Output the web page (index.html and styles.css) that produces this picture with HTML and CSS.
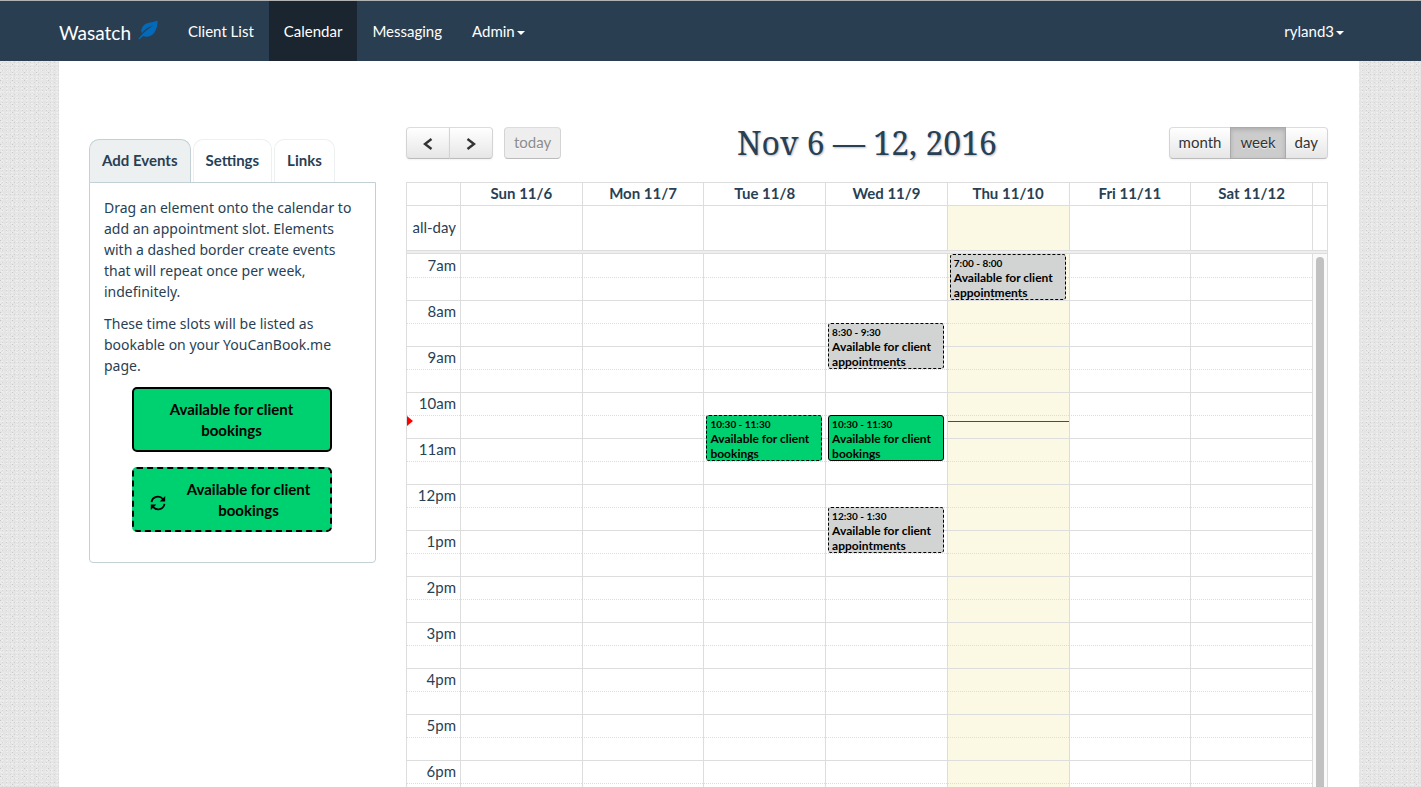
FILE: index.html
```html
<!DOCTYPE html>
<html lang="en">
<head>
<meta charset="utf-8">
<title>Wasatch – Calendar</title>
<link rel="stylesheet" href="styles.css">
</head>
<body>
<div class="page">
<header class="navbar">
  <a class="brand" href="#">Wasatch
    <svg class="leaf" viewBox="0 0 20 20" aria-hidden="true"><path fill="#0369b9" d="M19.6 0.6C14.5 2.9 9.200 2 5.600 5.600 3.200 8 2.900 11 3.700 13.300 6.500 9.400 10.500 6.900 15.600 5.200 11.300 7.900 7 11 3.300 15.300L.3 18.700 1.300 19.400 5 15.900C8.500 17.600 13.500 16.500 16.300 12.700 18.900 9.100 19.700 5 19.600.6Z"/></svg>
  </a>
  <nav class="menu">
    <a href="#">Client List</a>
    <a href="#" class="active" aria-current="page">Calendar</a>
    <a href="#">Messaging</a>
    <a href="#">Admin<span class="caret"></span></a>
  </nav>
  <a class="user" href="#">ryland3<span class="caret"></span></a>
</header>
<main class="content">
  <aside class="sidebar">
    <div class="tabs" role="tablist">
      <button class="tab selected" role="tab" aria-selected="true">Add Events</button>
      <button class="tab" role="tab" aria-selected="false">Settings</button>
      <button class="tab" role="tab" aria-selected="false">Links</button>
    </div>
    <section class="panel">
      <p>Drag an element onto the calendar to add an appointment slot. Elements with a dashed border create events that will repeat once per week, indefinitely.</p>
      <p>These time slots will be listed as bookable on your YouCanBook.me page.</p>
      <div class="slot" draggable="true"><span>Available for client bookings</span></div>
      <div class="slot repeating" draggable="true">
        <svg class="refresh" viewBox="0 0 16 16" fill="none" stroke="#000" stroke-width="1.800" aria-hidden="true"><path d="M1.500 7.200A6.500 6.500 0 0 1 13 4.200M14.500 8.800A6.500 6.500 0 0 1 3 11.800"/><path fill="#000" stroke="none" d="M15.200 1V6.500H9.700ZM.8 15V9.500H6.300Z"/></svg>
        <span>Available for client bookings</span>
      </div>
    </section>
  </aside>
  <section class="calendar">
    <div class="toolbar">
      <div class="tools">
        <div class="group">
          <button class="btn arrow" aria-label="Previous week"><svg viewBox="0 0 10 12"><path d="M8.500 1L2 6L8.500 11"/></svg></button>
          <button class="btn arrow" aria-label="Next week"><svg viewBox="0 0 10 12"><path d="M1.500 1L8 6L1.500 11"/></svg></button>
        </div>
        <button class="btn" disabled>today</button>
      </div>
      <h1>Nov 6 — 12, 2016</h1>
      <div class="tools end">
        <div class="group">
          <button class="btn">month</button>
          <button class="btn pressed" aria-pressed="true">week</button>
          <button class="btn">day</button>
        </div>
      </div>
    </div>
    <table class="week">
      <colgroup><col class="axis"><col span="7"><col class="gutter"></colgroup>
      <thead>
        <tr class="days"><td></td><th scope="col">Sun 11/6</th><th scope="col">Mon 11/7</th><th scope="col">Tue 11/8</th><th scope="col">Wed 11/9</th><th scope="col">Thu 11/10</th><th scope="col">Fri 11/11</th><th scope="col">Sat 11/12</th><td></td></tr>
        <tr class="allday"><th scope="row">all-day</th><td></td><td></td><td></td><td></td><td class="today"></td><td></td><td></td><td></td></tr>
        <tr class="divider"><td colspan="9"></td></tr>
      </thead>
      <tbody>
        <tr><th scope="row">7am</th><td></td><td></td><td></td><td></td><td class="today"><div class="event taken repeats"><time>7:00 - 8:00</time>Available for client appointments</div></td><td></td><td></td><td class="track" rowspan="24"><div class="thumb"></div></td></tr>
        <tr><th></th><td></td><td></td><td></td><td></td><td class="today"></td><td></td><td></td></tr>
        <tr><th scope="row">8am</th><td></td><td></td><td></td><td></td><td class="today"></td><td></td><td></td></tr>
        <tr><th></th><td></td><td></td><td></td><td><div class="event taken repeats"><time>8:30 - 9:30</time>Available for client appointments</div></td><td class="today"></td><td></td><td></td></tr>
        <tr><th scope="row">9am</th><td></td><td></td><td></td><td></td><td class="today"></td><td></td><td></td></tr>
        <tr><th></th><td></td><td></td><td></td><td></td><td class="today"></td><td></td><td></td></tr>
        <tr><th scope="row">10am</th><td></td><td></td><td></td><td></td><td class="today"></td><td></td><td></td></tr>
        <tr><th><span class="now-arrow"></span></th><td></td><td></td><td><div class="event repeats"><time>10:30 - 11:30</time>Available for client bookings</div></td><td><div class="event"><time>10:30 - 11:30</time>Available for client bookings</div></td><td class="today"><span class="now-line"></span></td><td></td><td></td></tr>
        <tr><th scope="row">11am</th><td></td><td></td><td></td><td></td><td class="today"></td><td></td><td></td></tr>
        <tr><th></th><td></td><td></td><td></td><td></td><td class="today"></td><td></td><td></td></tr>
        <tr><th scope="row">12pm</th><td></td><td></td><td></td><td></td><td class="today"></td><td></td><td></td></tr>
        <tr><th></th><td></td><td></td><td></td><td><div class="event taken repeats"><time>12:30 - 1:30</time>Available for client appointments</div></td><td class="today"></td><td></td><td></td></tr>
        <tr><th scope="row">1pm</th><td></td><td></td><td></td><td></td><td class="today"></td><td></td><td></td></tr>
        <tr><th></th><td></td><td></td><td></td><td></td><td class="today"></td><td></td><td></td></tr>
        <tr><th scope="row">2pm</th><td></td><td></td><td></td><td></td><td class="today"></td><td></td><td></td></tr>
        <tr><th></th><td></td><td></td><td></td><td></td><td class="today"></td><td></td><td></td></tr>
        <tr><th scope="row">3pm</th><td></td><td></td><td></td><td></td><td class="today"></td><td></td><td></td></tr>
        <tr><th></th><td></td><td></td><td></td><td></td><td class="today"></td><td></td><td></td></tr>
        <tr><th scope="row">4pm</th><td></td><td></td><td></td><td></td><td class="today"></td><td></td><td></td></tr>
        <tr><th></th><td></td><td></td><td></td><td></td><td class="today"></td><td></td><td></td></tr>
        <tr><th scope="row">5pm</th><td></td><td></td><td></td><td></td><td class="today"></td><td></td><td></td></tr>
        <tr><th></th><td></td><td></td><td></td><td></td><td class="today"></td><td></td><td></td></tr>
        <tr><th scope="row">6pm</th><td></td><td></td><td></td><td></td><td class="today"></td><td></td><td></td></tr>
        <tr><th></th><td></td><td></td><td></td><td></td><td class="today"></td><td></td><td></td></tr>
      </tbody>
    </table>
  </section>
</main>
</div>
</body>
</html>
```
FILE: styles.css
```css
* { box-sizing: border-box; }

body {
  margin: 0;
  font: 15px/21px Lato, sans-serif;
  color: #293f54;
  background-color: #e5e5e5;
  background-image:
    conic-gradient(at 1px 1px, transparent 75%, #c8c8c8 0),
    conic-gradient(at 1px 1px, transparent 75%, #cecece 0),
    conic-gradient(at 1px 1px, transparent 75%, #d6d6d6 0),
    conic-gradient(at 2px 1px, transparent 75%, #efefef 0),
    conic-gradient(at 1px 2px, transparent 75%, #ececec 0);
  background-size: 12px 8px, 8px 12px, 4px 4px, 5px 3px, 3px 7px;
  background-position: 0 0, 6px 2px, 2px 2px, 1px 1px, 0 0;
}

button { font: inherit; color: inherit; margin: 0; }

.page {
  height: 100vh;
  overflow: hidden;
  display: flex;
  flex-direction: column;
}

/* Navigation */
.navbar {
  flex: none;
  display: flex;
  height: 61px;
  padding: 0 62px 0 59px;
  border-top: 1px solid #b0b2b3;
  background: #2a3e51;
}
.navbar a {
  display: flex;
  align-items: center;
  color: #fff;
  text-decoration: none;
}
.navbar .brand {
  gap: 7px;
  padding: 2px 15px 0 0;
  font-size: 19px;
}
.leaf { width: 20px; height: 20px; margin-bottom: 4px; }
.menu { display: flex; }
.menu a, .navbar .user { padding: 0 15px; }
.navbar .active { background: #1a252f; }
.navbar .user { margin-left: auto; }
.caret {
  margin: 3px 0 0 2px;
  border: 4px solid transparent;
  border-top-color: #fff;
  border-bottom: 0;
}

.content {
  flex: 1;
  min-height: 0;
  display: flex;
  gap: 30px;
  margin: 0 62px 0 59px;
  padding: 66px 31px 0 30px;
  background: #fff;
}

/* Sidebar */
.sidebar { flex: none; width: 287px; padding-top: 12px; }
.tabs { display: flex; gap: 2px; }
.tab {
  height: 43px;
  padding: 0 12px 2px;
  border: 1px solid #ecf0f1;
  border-bottom: 0;
  border-radius: 10px 10px 0 0;
  background: #fff;
  font-weight: 700;
}
.tab.selected { border-color: #c3d0d5; background: #ecf0f1; }
.panel {
  padding: 14px 16px 30px 14px;
  border: 1px solid #c3d0d5;
  border-radius: 0 0 4px 4px;
}
.panel p {
  margin: 0 0 11px;
  font: 14px/21px "Noto Sans", sans-serif;
}
.slot {
  display: flex;
  align-items: center;
  justify-content: center;
  width: 200px;
  height: 65px;
  margin: 0 auto 15px;
  padding: 0 16px;
  border: 2px solid #000;
  border-radius: 5px;
  background: #00d170;
  color: #000;
  font-weight: 700;
  text-align: center;
}
.panel .slot:last-child { margin-bottom: 0; }
.slot.repeating { gap: 18px; border-style: dashed; }
.refresh { flex: none; width: 16px; height: 16px; margin-top: 6px; }

/* Calendar toolbar */
.calendar { flex: 1; min-width: 0; }
.toolbar { display: flex; height: 55px; align-items: flex-start; }
.tools { flex: 1; display: flex; gap: 11px; }
.tools.end { justify-content: flex-end; }
.toolbar h1 {
  margin: 0;
  font: 32px/32px "Noto Serif", "Droid Serif", "DejaVu Serif", serif;
  text-shadow: 1px 1px 2px #bbb;
  white-space: nowrap;
}
.group { display: flex; }
.btn {
  height: 32px;
  padding: 0 9px 2px;
  border: 1px solid;
  border-color: #dcdcdc #d4d4d4 #bbb;
  border-radius: 4px;
  background: linear-gradient(#fff, #e6e6e6);
  color: #333;
  box-shadow: 0 1px 2px #0000000d;
  text-shadow: 0 1px 1px #ffffffbf;
}
.group .btn + .btn { margin-left: -1px; }
.group .btn:not(:first-child) { border-top-left-radius: 0; border-bottom-left-radius: 0; }
.group .btn:not(:last-child) { border-top-right-radius: 0; border-bottom-right-radius: 0; }
.btn.arrow { width: 44px; padding: 0; }
.arrow svg {
  display: block;
  width: 10px;
  height: 12px;
  margin: 2px auto 0;
  fill: none;
  stroke: #333;
  stroke-width: 2.400;
}
.btn.pressed {
  z-index: 1;
  border-color: #aaa;
  background: #ccc;
  box-shadow: inset 0 2px 4px #00000026;
}
.btn:disabled { background: #eee; color: #8c8c8c; box-shadow: none; }

/* Week grid */
.week {
  width: 100%;
  table-layout: fixed;
  border-collapse: separate;
  border-spacing: 0;
  border: 1px solid #ddd;
  border-width: 1px 1px 0;
}
.axis { width: 53px; }
.gutter { width: 15px; }
.week th, .week td {
  position: relative;
  height: 23px;
  padding: 0 0 2px;
  border-left: 1px solid #ddd;
  line-height: 20px;
}
.week tr > :first-child { border-left: 0; }
.week .days > * { height: 22px; }
.week .allday > * { height: 46px; border-top: 1px solid #ddd; }
.week th[scope="row"] { padding-right: 4px; text-align: right; font-weight: 400; }
.week .today { background: #fbf8e3; }
.week .divider td {
  height: 4px;
  padding: 0;
  border: solid #ddd;
  border-width: 1px 0;
  background: #eee;
  line-height: 0;
}
.week .allday > * { height: 45px; }
.week tbody tr + tr > * { border-top: 1px dotted #ddd; }
.week tbody tr:nth-child(n+2):nth-child(odd) > * { border-top-style: solid; }
.week .track { background: #fafafa; vertical-align: top; }
.thumb {
  position: absolute;
  inset: 3px 3px 0;
  border-radius: 4px 4px 0 0;
  background: #c1c1c1;
}

.event {
  position: absolute;
  z-index: 1;
  inset: -1px 3px auto 2px;
  height: 46px;
  overflow: hidden;
  padding: 1px 3px;
  border: 1px solid #000;
  border-radius: 3px;
  background: #00d170;
  color: #000;
  font-size: 12px;
  font-weight: 700;
  line-height: 15px;
}
.event.repeats { border-style: dashed; }
.event.taken { background: #d2d4d3; }
.week tbody tr:first-child .event { top: 0; }
.event time { display: block; font-size: 10px; line-height: 14px; }
.now-line {
  position: absolute;
  inset: 5px 0 auto;
  border-top: 1px solid #f00;
}
.now-arrow {
  position: absolute;
  top: 0;
  left: 0;
  border: 5px solid transparent;
  border-left: 6px solid #f00;
  border-right: 0;
}
```
